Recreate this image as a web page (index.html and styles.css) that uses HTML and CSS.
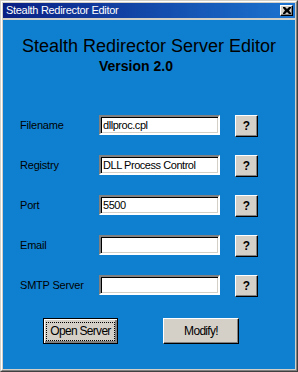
FILE: index.html
```html
<!DOCTYPE html>
<html lang="en">
<head>
    <meta charset="UTF-8">
    <title>Stealth Redirector Editor</title>
    <link rel="stylesheet" href="styles.css">
</head>
<body>
    <div class="window">
        <div class="frame">
            <div class="titlebar">
                <span class="title">Stealth Redirector Editor</span>
                <button class="close-btn" aria-label="Close">
                    <svg width="8" height="7" viewBox="0 0 8 7">
                        <path d="M0 0h2l2 2 2-2h2v1l-2 2.5 2 2.5v1h-2l-2-2-2 2h-2v-1l2-2.5-2-2.5z" fill="#000"/>
                    </svg>
                </button>
            </div>

            <div class="client">
                <h1 class="heading">Stealth Redirector Server Editor</h1>
                <h2 class="version">Version 2.0</h2>

                <div class="fields">
                    <div class="row">
                        <span class="label">Filename</span>
                        <div class="field">dllproc.cpl</div>
                        <button class="help-btn">?</button>
                    </div>
                    <div class="row">
                        <span class="label">Registry</span>
                        <div class="field">DLL Process Control</div>
                        <button class="help-btn">?</button>
                    </div>
                    <div class="row">
                        <span class="label">Port</span>
                        <div class="field">5500</div>
                        <button class="help-btn">?</button>
                    </div>
                    <div class="row">
                        <span class="label">Email</span>
                        <div class="field"></div>
                        <button class="help-btn">?</button>
                    </div>
                    <div class="row">
                        <span class="label">SMTP Server</span>
                        <div class="field"></div>
                        <button class="help-btn">?</button>
                    </div>
                </div>

                <div class="actions">
                    <button class="push-btn default"><span class="focus">Open Server</span></button>
                    <button class="push-btn">Modify!</button>
                </div>
            </div>
        </div>
    </div>
</body>
</html>
```

FILE: styles.css
```css
:root {
    --face: #d4d0c8;
    --shadow: #808080;
    --dark: #404040;
    --client: #0f80d0;
    --ui-font: 'Liberation Sans', Arial, sans-serif;
}

* {
    margin: 0;
    padding: 0;
    box-sizing: border-box;
}

body {
    font-family: var(--ui-font);
    background: var(--face);
}

.window {
    width: 298px;
    height: 372px;
    background: var(--face);
    border: 1px solid;
    border-color: var(--face) var(--dark) var(--dark) var(--face);
}

.frame {
    height: 100%;
    display: flex;
    flex-direction: column;
    border: 1px solid;
    border-color: #fff var(--shadow) var(--shadow) #fff;
    padding: 1px;
}

/* title bar */
.titlebar {
    height: 15px;
    display: flex;
    align-items: center;
    justify-content: space-between;
    padding: 0 2px 0 3px;
    background: linear-gradient(to right, #0a1f84, #1c74d0);
    margin-bottom: 2px;
}

.title {
    color: #fff;
    font-size: 11px;
    letter-spacing: -0.3px;
    line-height: 15px;
}

.close-btn {
    width: 13px;
    height: 11px;
    display: flex;
    align-items: center;
    justify-content: center;
    background: var(--face);
    border: 1px solid;
    border-color: #fff #000 #000 #fff;
    box-shadow: inset -1px -1px var(--shadow);
}

/* client area */
.client {
    flex: 1;
    background: var(--client);
    padding-top: 16px;
    color: #000;
}

.heading {
    font-size: 18px;
    font-weight: normal;
    line-height: 20px;
    text-align: center;
}

.version {
    font-size: 14px;
    font-weight: bold;
    line-height: 16px;
    margin-top: 2px;
    padding-left: 96px;
}

.fields {
    margin-top: 41px;
    display: flex;
    flex-direction: column;
    gap: 18px;
}

.row {
    display: flex;
    align-items: flex-start;
    padding-left: 17px;
}

.label {
    width: 79px;
    font-size: 11px;
    letter-spacing: -0.2px;
    line-height: 20px;
}

.field {
    width: 121px;
    height: 20px;
    font-size: 11px;
    letter-spacing: -0.45px;
    line-height: 16px;
    padding: 0 2px 0 2px;
    white-space: nowrap;
    overflow: hidden;
    background: #fff;
    border: 2px solid;
    border-color: var(--shadow) #fff #fff var(--shadow);
    box-shadow: inset 1px 1px #000, inset -1px -1px var(--face);
}

.help-btn {
    width: 23px;
    height: 22px;
    margin-left: 15px;
    font-family: var(--ui-font);
    font-size: 12px;
    font-weight: bold;
    background: var(--face);
    border: 1px solid;
    border-color: #fff #000 #000 #fff;
    box-shadow: inset -1px -1px var(--shadow);
}

.actions {
    display: flex;
    margin-top: 21px;
    padding-left: 40px;
    gap: 45px;
}

.push-btn {
    width: 76px;
    height: 26px;
    font-family: var(--ui-font);
    font-size: 12px;
    letter-spacing: -0.7px;
    white-space: nowrap;
    background: var(--face);
    border: 1px solid;
    border-color: #fff #000 #000 #fff;
    box-shadow: inset -1px -1px var(--shadow);
    display: flex;
    align-items: center;
    justify-content: center;
}

.push-btn.default {
    width: 75px;
    border: 1px solid #000;
    box-shadow: inset 1px 1px #fff, inset -2px -2px var(--shadow);
}

.focus {
    display: block;
    width: 100%;
    height: 19px;
    margin: 0 2px;
    border: 1px dotted #000;
    line-height: 17px;
}
```
